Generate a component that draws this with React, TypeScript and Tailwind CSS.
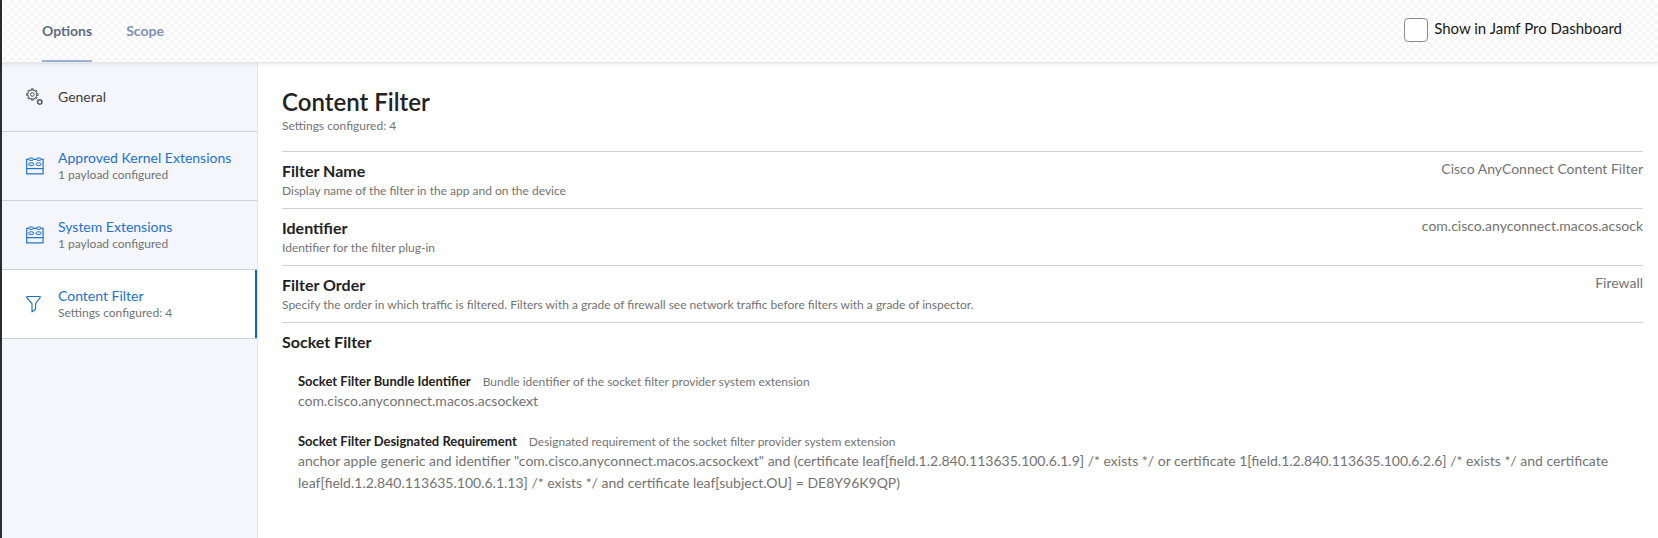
import type { ReactNode } from "react";

const TOOTH_ANGLES = [0, 45, 90, 135, 180, 225, 270, 315];

function GearsIcon() {
  return (
    <svg viewBox="0 0 18 18" className="size-[18px]" fill="none" stroke="currentColor" aria-hidden="true">
      <circle cx="6.3" cy="6.5" r="4.5" />
      <circle cx="6.3" cy="6.5" r="1.8" />
      {TOOTH_ANGLES.map((a) => (
        <path key={a} d="M5.3 2.2V.8h2v1.4" strokeWidth=".9" transform={`rotate(${a} 6.3 6.5)`} />
      ))}
      <circle cx="13.8" cy="13.9" r="2.1" strokeWidth="1.2" />
      {TOOTH_ANGLES.map((a) => (
        <path key={a} d="M13.8 11.8v-1" strokeWidth="1" transform={`rotate(${a} 13.8 13.9)`} />
      ))}
    </svg>
  );
}

function BrickIcon() {
  return (
    <svg viewBox="0 0 18 18" className="size-[18px]" fill="none" stroke="currentColor" aria-hidden="true">
      <path d="M.7 2.3h16.4v14.5H.7zM.7 11.6h16.4" strokeWidth="1.2" />
      <g fill="#dcebfb" strokeWidth="1">
        <ellipse cx="5" cy="2.2" rx="2.5" ry="1.3" />
        <ellipse cx="12.8" cy="2.2" rx="2.5" ry="1.3" />
        <ellipse cx="5.2" cy="7.2" rx="2.6" ry="1.5" />
        <ellipse cx="12.6" cy="7.2" rx="2.6" ry="1.5" />
      </g>
    </svg>
  );
}

function FunnelIcon() {
  return (
    <svg viewBox="0 0 18 18" className="size-[18px]" fill="none" stroke="currentColor" strokeLinejoin="round" aria-hidden="true">
      <path d="M.8 1.5h13.4v1L9.6 8.6v5.8L6 16.8V8.6L.8 2.5z" strokeWidth="1.2" />
    </svg>
  );
}

type Item = { title: string; note?: string; icon: ReactNode; active?: boolean };

const items: Item[] = [
  { title: "General", icon: <GearsIcon /> },
  { title: "Approved Kernel Extensions", note: "1 payload configured", icon: <BrickIcon /> },
  { title: "System Extensions", note: "1 payload configured", icon: <BrickIcon /> },
  { title: "Content Filter", note: "Settings configured: 4", icon: <FunnelIcon />, active: true },
];

const settings = [
  { name: "Filter Name", help: "Display name of the filter in the app and on the device", value: "Cisco AnyConnect Content Filter" },
  { name: "Identifier", help: "Identifier for the filter plug-in", value: "com.cisco.anyconnect.macos.acsock" },
  {
    name: "Filter Order",
    help: "Specify the order in which traffic is filtered. Filters with a grade of firewall see network traffic before filters with a grade of inspector.",
    value: "Firewall",
  },
];

const socketFields = [
  {
    name: "Socket Filter Bundle Identifier",
    help: "Bundle identifier of the socket filter provider system extension",
    value: "com.cisco.anyconnect.macos.acsockext",
  },
  {
    name: "Socket Filter Designated Requirement",
    help: "Designated requirement of the socket filter provider system extension",
    value:
      'anchor apple generic and identifier "com.cisco.anyconnect.macos.acsockext" and (certificate leaf[field.1.2.840.113635.100.6.1.9] /* exists */ or certificate 1[field.1.2.840.113635.100.6.2.6] /* exists */ and certificate leaf[field.1.2.840.113635.100.6.1.13] /* exists */ and certificate leaf[subject.OU] = DE8Y96K9QP)',
  },
];

export default function App() {
  return (
    <div className="flex min-h-screen flex-col border-l-2 border-[#2b2b30] bg-white font-['Lato',sans-serif] text-[#737373]">
      <header className="relative z-10 flex h-[63px] items-stretch justify-between border-b border-[#e6e6e6] bg-[#fefefe] bg-[radial-gradient(circle_at_30%_30%,#f4f4f4_1px,transparent_3px),radial-gradient(circle_at_80%_80%,#f4f4f4_1px,transparent_3px)] bg-size-[8px_8px] pr-9 pl-10 shadow-[0_1px_4px_rgba(0,0,0,0.1)]">
        <nav className="flex gap-[34px]">
          <a href="#options" className="border-b-2 border-[#9db3d6] pt-[19px] text-sm leading-6 font-bold text-[#5f6b85]">
            Options
          </a>
          <a href="#scope" className="border-b-2 border-transparent pt-[19px] text-sm leading-6 font-bold text-[#8091b3]">
            Scope
          </a>
        </nav>
        <label className="flex gap-[6px] pt-[18px] text-[15px] leading-5 text-[#1a1a1a]">
          <input type="checkbox" className="size-6 appearance-none rounded border border-[#8c8c8c] bg-white checked:bg-[#1667b7]" />
          Show in Jamf Pro Dashboard
        </label>
      </header>

      <div className="flex flex-1">
        <aside className="w-64 shrink-0 border-r border-[#e2e6ef] bg-[#f4f6fb]">
          {items.map((item) => (
            <a
              key={item.title}
              href="#payload"
              className={
                item.active
                  ? "flex h-[69px] items-center gap-[14px] border-b border-[#cfd1d6] bg-white pl-6 shadow-[inset_-2px_0_0_#1667b7]"
                  : "flex h-[69px] items-center gap-[14px] border-b border-[#cfd1d6] pl-6"
              }
            >
              <span className={item.note ? "text-[#2273cf]" : "text-[#505050]"}>{item.icon}</span>
              <span className="flex flex-col">
                <span className={item.note ? "text-sm leading-[18px] text-[#2273cf]" : "text-sm leading-[18px] text-[#404040]"}>
                  {item.title}
                </span>
                {item.note && <span className="text-xs leading-4">{item.note}</span>}
              </span>
            </a>
          ))}
        </aside>

        <main className="min-w-0 flex-1 pt-[23px] pr-[15px] pl-6">
          <h1 className="text-2xl leading-8 font-semibold text-[#222]">Content Filter</h1>
          <p className="pb-[17px] text-xs leading-4">Settings configured: 4</p>
          <dl>
            {settings.map((s) => (
              <div key={s.name} className="flex h-[57px] justify-between border-t border-[#d0d0d0] pt-[7px]">
                <dt>
                  <div className="text-base leading-6 font-bold text-[#222]">{s.name}</div>
                  <div className="text-xs leading-4">{s.help}</div>
                </dt>
                <dd className="text-sm leading-5">{s.value}</dd>
              </div>
            ))}
          </dl>
          <section className="border-t border-[#d0d0d0] pt-[7px]">
            <h2 className="text-base leading-6 font-bold text-[#222]">Socket Filter</h2>
            <dl className="flex flex-col gap-5 pt-[18px] pl-4">
              {socketFields.map((f) => (
                <div key={f.name}>
                  <dt className="flex items-baseline gap-3 leading-[18px]">
                    <span className="text-[13px] font-bold text-[#222]">{f.name}</span>
                    <span className="text-xs">{f.help}</span>
                  </dt>
                  <dd className="text-sm leading-[22px]">{f.value}</dd>
                </div>
              ))}
            </dl>
          </section>
        </main>
      </div>
    </div>
  );
}
